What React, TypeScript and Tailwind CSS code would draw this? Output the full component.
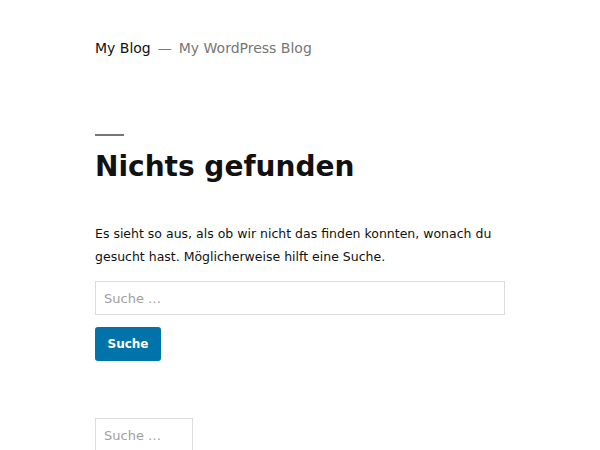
const SearchForm = ({ wide }: { wide: boolean }) => (
  <form className="flex flex-col" onSubmit={(e) => e.preventDefault()}>
    <input
      type="search"
      placeholder="Suche …"
      className={
        (wide ? "w-[410px]" : "w-[98px]") +
        " h-[34px] border border-[#dcdcdc] px-2 text-[13px] text-[#111] placeholder:text-[#a0a0a0] outline-none"
      }
    />
    {wide && (
      <button
        type="submit"
        className="mt-[12px] h-[34px] w-[66px] rounded-[3px] bg-[#0073aa] text-[12px] font-bold text-white"
      >
        Suche
      </button>
    )}
  </form>
);

export default function App() {
  return (
    <div className="min-h-[450px] bg-white pl-[95px] font-['DejaVu_Sans',sans-serif] text-[#111]">
      <header className="flex items-baseline pt-[38px] text-[14px] leading-[20px]">
        <span>My Blog</span>
        <span className="mx-[7px] text-[#767676]">—</span>
        <span className="text-[#767676]">My WordPress Blog</span>
      </header>

      <main className="pt-[76px]">
        <div className="h-[2px] w-[29px] bg-[#767676]" />
        <h1 className="mt-[11px] text-[28px] font-bold leading-[40px]">Nichts gefunden</h1>

        <p className="mt-[35px] w-[420px] text-[12.5px] leading-[23px]">
          Es sieht so aus, als ob wir nicht das finden konnten, wonach du gesucht hast.
          Möglicherweise hilft eine Suche.
        </p>

        <div className="mt-[13px]">
          <SearchForm wide />
        </div>

        <div className="mt-[57px]">
          <SearchForm wide={false} />
        </div>
      </main>
    </div>
  );
}
